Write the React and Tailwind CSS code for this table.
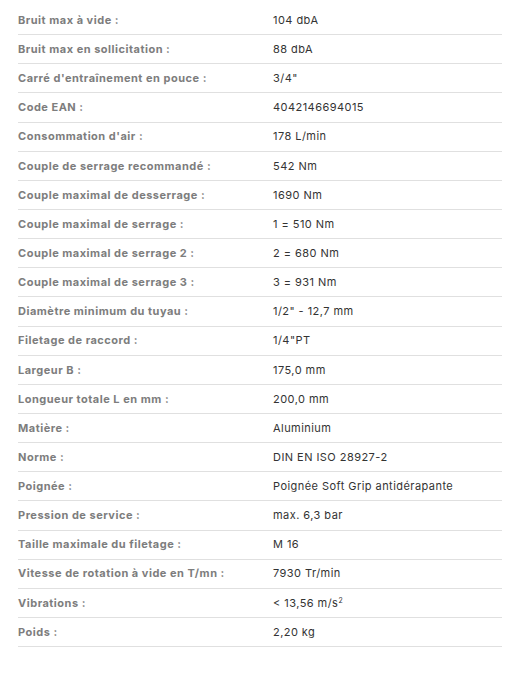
import React from 'react';

const specs = [
  ['Bruit max à vide :', '104 dbA'],
  ['Bruit max en sollicitation :', '88 dbA'],
  ["Carré d'entraînement en pouce :", '3/4"'],
  ['Code EAN :', '4042146694015'],
  ["Consommation d'air :", '178 L/min'],
  ['Couple de serrage recommandé :', '542 Nm'],
  ['Couple maximal de desserrage :', '1690 Nm'],
  ['Couple maximal de serrage :', '1 = 510 Nm'],
  ['Couple maximal de serrage 2 :', '2 = 680 Nm'],
  ['Couple maximal de serrage 3 :', '3 = 931 Nm'],
  ['Diamètre minimum du tuyau :', '1/2" - 12,7 mm'],
  ['Filetage de raccord :', '1/4"PT'],
  ['Largeur B :', '175,0 mm'],
  ['Longueur totale L en mm :', '200,0 mm'],
  ['Matière :', 'Aluminium'],
  ['Norme :', 'DIN EN ISO 28927-2'],
  ['Poignée :', 'Poignée Soft Grip antidérapante'],
  ['Pression de service :', 'max. 6,3 bar'],
  ['Taille maximale du filetage :', 'M 16'],
  ['Vitesse de rotation à vide en T/mn :', '7930 Tr/min'],
  ['Vibrations :', <>{'< 13,56 m/s'}<sup className="text-[7px]">2</sup></>],
  ['Poids :', '2,20 kg'],
];

export default function App() {
  return (
    <div className="bg-white w-[515px] h-[678px] pt-[6px] px-[18px] font-['Inter',sans-serif] text-[11px]">
      <div className="w-[484px]">
        {specs.map(([label, value], i) => (
          <div key={i} className="flex items-center h-[29.15px] border-b border-[#e0e0e0]">
            <div className="w-[255px] font-bold tracking-[0.5px] text-[#7d7d7d]">{label}</div>
            <div className="tracking-[0.45px] text-[#333]">{value}</div>
          </div>
        ))}
      </div>
    </div>
  );
}
